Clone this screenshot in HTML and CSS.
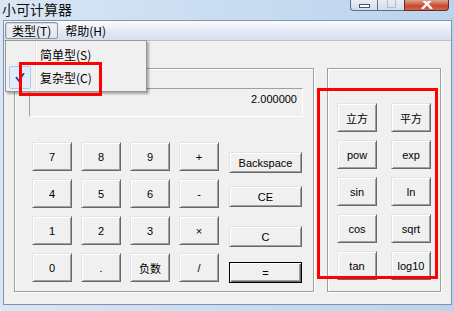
FILE: index.html
```html
<!DOCTYPE html>
<html lang="zh-CN">
<head>
    <meta charset="UTF-8">
    <title>小可计算器</title>
    <link rel="stylesheet" href="styles.css">
</head>
<body>
    <div class="window">
        <div class="titlebar">
            <span class="title">小可计算器</span>
            <div class="controls">
                <div class="ctl ctl-min"><span class="min-glyph"></span></div>
                <div class="ctl ctl-max"><span class="max-glyph"></span></div>
                <div class="ctl ctl-close">
                    <svg width="14" height="8" viewBox="0 0 14 8"><path d="M2 -2 L7 3 L12 -2 M2 8 L7 3 L12 8" stroke="#fff" stroke-width="2.4" fill="none"/></svg>
                </div>
            </div>
        </div>

        <div class="client">
            <div class="menubar">
                <div class="menu-item active">类型(T)</div>
                <div class="menu-item">帮助(H)</div>
            </div>

            <div class="content">
                <div class="group group-main">
                    <div class="display">2.000000</div>
                    <div class="keypad">
                        <div class="numbers">
                            <button class="btn">7</button>
                            <button class="btn">8</button>
                            <button class="btn">9</button>
                            <button class="btn">+</button>
                            <button class="btn">4</button>
                            <button class="btn">5</button>
                            <button class="btn">6</button>
                            <button class="btn">-</button>
                            <button class="btn">1</button>
                            <button class="btn">2</button>
                            <button class="btn">3</button>
                            <button class="btn">×</button>
                            <button class="btn">0</button>
                            <button class="btn">.</button>
                            <button class="btn">负数</button>
                            <button class="btn">/</button>
                        </div>
                        <div class="ops">
                            <button class="btn op op-back">Backspace</button>
                            <button class="btn op op-ce">CE</button>
                            <button class="btn op op-c">C</button>
                            <button class="btn op op-eq default">=</button>
                        </div>
                    </div>
                </div>

                <div class="group group-sci">
                    <div class="sci">
                        <button class="btn">立方</button>
                        <button class="btn">平方</button>
                        <button class="btn">pow</button>
                        <button class="btn">exp</button>
                        <button class="btn">sin</button>
                        <button class="btn">ln</button>
                        <button class="btn">cos</button>
                        <button class="btn">sqrt</button>
                        <button class="btn">tan</button>
                        <button class="btn">log10</button>
                    </div>
                </div>
            </div>
        </div>

        <!-- dropdown of the 类型 menu -->
        <div class="dropdown">
            <div class="drop-item">简单型(S)</div>
            <div class="drop-item checked">
                <span class="check">
                    <svg width="10" height="10" viewBox="0 0 10 10"><path d="M1 4 L4 8 L9 0" stroke="#1f3f9c" stroke-width="1.6" fill="none"/></svg>
                </span>
                复杂型(C)
            </div>
        </div>

        <!-- red annotation boxes -->
        <div class="mark mark-menu"></div>
        <div class="mark mark-sci"></div>
    </div>
</body>
</html>
```

FILE: styles.css
```css
:root {
    --face: #f0f0f0;
    --shadow: #a0a0a0;
    --dark: #696969;
}

body {
    margin: 0;
    font-family: "Liberation Sans", "Noto Sans CJK SC", sans-serif;
    font-size: 11px;
    color: #000;
}

.window {
    position: relative;
    width: 454px;
    height: 311px;
    display: flex;
    flex-direction: column;
    background: linear-gradient(90deg, #d9e6f5 0%, #c9dcf1 50%, #bcd3ee 100%);
    overflow: hidden;
}

.titlebar {
    height: 20px;
    display: flex;
    align-items: flex-start;
}

.title {
    padding-left: 2px;
    font-family: "Noto Sans CJK SC", sans-serif;
    font-size: 14px;
    line-height: 19px;
    color: #111;
}

.controls {
    display: flex;
    margin-left: auto;
    margin-right: 5px;
}

.ctl {
    height: 10px;
    width: 26px;
    border: 1px solid #5e6f86;
    border-top: none;
    display: flex;
    align-items: center;
    justify-content: center;
    background: linear-gradient(#e8eef6, #d2dceb);
}

.ctl-min {
    border-bottom-left-radius: 4px;
    border-right: none;
}

.ctl-max {
    border-right: none;
}

.ctl-close {
    width: 43px;
    background: linear-gradient(#e0a592, #c9462c 60%, #d06a50);
    border-bottom-right-radius: 4px;
    border-color: #6c2a20;
}

.min-glyph {
    width: 9px;
    height: 2px;
    border: 1px solid #4b5568;
    background: #fff;
    margin-top: 1px;
}

.max-glyph {
    width: 7px;
    height: 7px;
    border: 1px solid #b4bcc8;
    margin-top: -4px;
}

.client {
    flex: 1;
    margin: 0 2px 6px 3px;
    border: 1px solid #8292aa;
    background: var(--face);
    display: flex;
    flex-direction: column;
}

.menubar {
    height: 19px;
    border-bottom: 1px solid #b9c2d3;
    background: linear-gradient(#fbfcfe, #e4e9f4 55%, #d6deee);
    display: flex;
    padding-left: 1px;
}

.menu-item {
    height: 15px;
    margin-top: 1px;
    padding: 0 6px;
    border: 1px solid transparent;
    font-family: "Noto Sans CJK SC", sans-serif;
    font-size: 12px;
    line-height: 15px;
}

.menu-item.active {
    border-color: #8e96a3;
    border-radius: 2px;
    background: linear-gradient(#eef1f6, #e3e7ee);
    box-shadow: inset 1px 1px 0 #d3d8e0;
}

.content {
    flex: 1;
    display: flex;
    gap: 13px;
    padding: 27px 10px 0 10px;
}

.group {
    height: 224px;
    box-sizing: border-box;
    border: 1px solid var(--shadow);
    box-shadow: 1px 1px 0 #fff, inset 1px 1px 0 #fff;
}

.group-main {
    width: 300px;
    padding: 19px 0 0 14px;
}

.group-sci {
    width: 114px;
    padding: 34px 0 0 9px;
}

.display {
    width: 274px;
    height: 29px;
    box-sizing: border-box;
    border: 1px solid;
    border-color: var(--shadow) #fff #fff var(--shadow);
    padding: 4px 5px 0 0;
    text-align: right;
    line-height: 13px;
}

.keypad {
    display: flex;
    gap: 10px;
    margin: 25px 0 0 3px;
}

.numbers {
    display: grid;
    grid-template-columns: repeat(4, 40px);
    grid-auto-rows: 29px;
    column-gap: 9px;
    row-gap: 8px;
}

.sci {
    display: grid;
    grid-template-columns: repeat(2, 40px);
    grid-auto-rows: 29px;
    column-gap: 14px;
    row-gap: 8px;
}

.btn {
    margin: 0;
    padding: 0;
    box-sizing: border-box;
    background: var(--face);
    border: 1px solid;
    border-color: #e3e3e3 var(--dark) var(--dark) #e3e3e3;
    box-shadow: inset 1px 1px 0 #fff, inset -1px -1px 0 var(--shadow);
    font-family: "Liberation Sans", "Noto Sans CJK SC", sans-serif;
    font-size: 11px;
    color: #000;
}

.ops {
    display: flex;
    flex-direction: column;
    width: 73px;
}

.op {
    height: 21px;
}

.op-back { margin-top: 10px; }
.op-ce { margin-top: 13px; }
.op-c { margin-top: 19px; }
.op-eq { margin-top: 15px; }

.btn.default {
    border: 1px solid #000;
    box-shadow: inset 1px 1px 0 #fff, inset -1px -1px 0 var(--dark), inset -2px -2px 0 var(--shadow);
}

.dropdown {
    position: absolute;
    left: 5px;
    top: 40px;
    width: 142px;
    box-sizing: border-box;
    padding: 2px;
    border: 1px solid #979797;
    background: linear-gradient(90deg, var(--face) 29px, #e2e3e3 29px, #e2e3e3 30px, #fff 30px, #fff 31px, var(--face) 31px);
    box-shadow: 2px 2px 2px rgba(0, 0, 0, 0.3);
    font-family: "Noto Sans CJK SC", sans-serif;
    font-size: 12px;
}

.drop-item {
    position: relative;
    height: 23px;
    line-height: 23px;
    padding-left: 32px;
}

.check {
    position: absolute;
    left: 1px;
    top: 0;
    width: 20px;
    height: 21px;
    border: 1px solid #a9c9ef;
    border-radius: 2px;
    background: #e3edf9;
    display: flex;
    align-items: center;
    justify-content: center;
}

.mark {
    position: absolute;
    border: 3px solid #ff0000;
    box-sizing: border-box;
}

.mark-menu {
    left: 19px;
    top: 62px;
    width: 83px;
    height: 34px;
}

.mark-sci {
    left: 317px;
    top: 88px;
    width: 121px;
    height: 191px;
}
```
